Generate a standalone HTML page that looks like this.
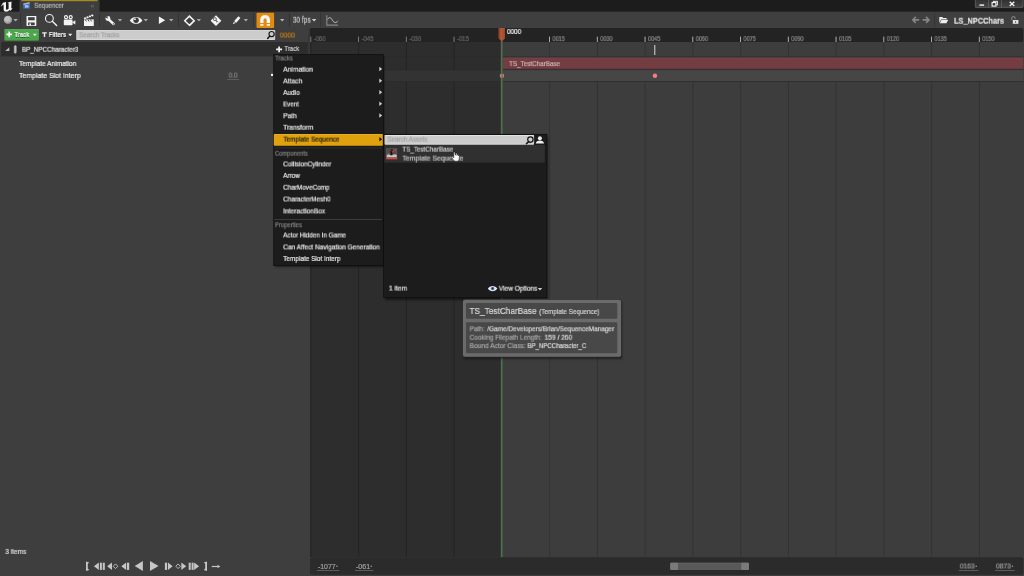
<!DOCTYPE html>
<html><head><meta charset="utf-8"><title>Sequencer</title>
<style>
html,body{margin:0;padding:0;width:1024px;height:576px;overflow:hidden;background:#3e3e3e;font-family:"Liberation Sans", sans-serif;}
#root{position:relative;width:1024px;height:576px;overflow:hidden;}
#root div,#root svg{position:absolute;}
.t{position:absolute;left:0;top:0;white-space:pre;line-height:1;transform-origin:0 0;will-change:transform;font-family:"Liberation Sans", sans-serif;-webkit-text-stroke:0.22px;}
</style></head><body><div id="root">
<svg width="1024" height="576" viewBox="0 0 1024 576" style="left:0;top:0"><rect x="0.00" y="0.00" width="1024.00" height="11.80" fill="#1c1c1c"/><g transform="translate(0 0)"><path d="M3 2.7L6 2.1V8.5C6 9.6 6.7 10 7.5 9.5L8.6 8.7V3.3L7.5 2.7L11.5 1.5L11.3 8.5L12.7 8.1L10.7 10.7L9.7 9.9C8.1 11.3 6.7 12.1 5.4 11.7C4 11.3 3.6 10.1 3.6 8.9V4.5C2.6 5.1 1.6 6.1 0.5 6.9C1.4 5.4 2.4 3.8 3 2.7Z" fill="#f4f4f4"/></g><rect x="19.50" y="0.00" width="80.00" height="12.00" rx="1.0" fill="#3e3e3e"/><rect x="21.50" y="0.00" width="76.00" height="1.20" fill="#a78c1c"/><g transform="translate(23 2)"><rect x="0.3" y="1.6" width="6.6" height="5" fill="#3f74c4"/><path d="M0.3 1.6L6.4 0.1L6.9 1.4L0.6 3Z" fill="#9fb4cf"/><rect x="2" y="3.2" width="3.4" height="2.4" fill="#a8c4ea"/></g></svg>
<span class="t" style="font-size:7px;color:#bcbcbc;font-weight:normal;transform:translate(34.30px,1.80px) scaleX(0.8676);">Sequencer</span>
<span class="t" style="font-size:6px;color:#666;font-weight:normal;transform:translate(90.60px,3.20px) scaleX(1.0667);">×</span>
<svg width="1024" height="576" viewBox="0 0 1024 576" style="left:0;top:0"><defs><linearGradient id="wb" x1="0" y1="0" x2="0" y2="1"><stop offset="0" stop-color="#2e2e2e"/><stop offset="1" stop-color="#474747"/></linearGradient></defs><rect x="975.3" y="-1" width="47.8" height="8.6" rx="0.8" fill="url(#wb)" stroke="#737373" stroke-width="0.6"/><rect x="988.30" y="0.00" width="0.60" height="7.40" fill="#707070"/><rect x="1001.20" y="0.00" width="0.60" height="7.40" fill="#707070"/><rect x="979.50" y="4.40" width="4.60" height="1.40" fill="#f4f4f4"/><g transform="translate(991.5 0.8)"><rect x="1.9" y="0.5" width="4" height="3.6" fill="none" stroke="#f2f2f2" stroke-width="0.9"/><rect x="0.6" y="1.7" width="3.8" height="3.6" fill="#3c3c3c" stroke="#f2f2f2" stroke-width="1.1"/></g><g transform="translate(1009.2 1.4)"><path d="M0.5 0.4L5.1 4.6M5.1 0.4L0.5 4.6" stroke="#f4f4f4" stroke-width="1.3"/></g><rect x="0.00" y="11.80" width="1024.00" height="16.40" fill="#3f3f3f"/><rect x="20.40" y="13.40" width="0.90" height="13.40" fill="#2d2d2d"/><rect x="21.30" y="13.40" width="0.50" height="13.40" fill="#474747"/><rect x="99.30" y="13.40" width="0.90" height="13.40" fill="#2d2d2d"/><rect x="100.20" y="13.40" width="0.50" height="13.40" fill="#474747"/><rect x="178.40" y="13.40" width="0.90" height="13.40" fill="#2d2d2d"/><rect x="179.30" y="13.40" width="0.50" height="13.40" fill="#474747"/><rect x="253.30" y="13.40" width="0.90" height="13.40" fill="#2d2d2d"/><rect x="254.20" y="13.40" width="0.50" height="13.40" fill="#474747"/><rect x="289.30" y="13.40" width="0.90" height="13.40" fill="#2d2d2d"/><rect x="290.20" y="13.40" width="0.50" height="13.40" fill="#474747"/><rect x="320.50" y="13.40" width="0.90" height="13.40" fill="#2d2d2d"/><rect x="321.40" y="13.40" width="0.50" height="13.40" fill="#474747"/><rect x="934.40" y="13.40" width="0.90" height="13.40" fill="#2d2d2d"/><rect x="935.30" y="13.40" width="0.50" height="13.40" fill="#474747"/><rect x="0.00" y="28.00" width="310.00" height="14.00" fill="#3e3e3e"/><rect x="4.40" y="29.20" width="34.50" height="11.30" rx="1.0" fill="#4ba64c"/><rect x="4.70" y="29.20" width="33.90" height="0.60" fill="#62bd62"/><rect x="4.70" y="39.90" width="33.90" height="0.60" fill="#3b8b3c"/></svg>
<span class="t" style="font-size:7.4px;color:#e4efe4;font-weight:bold;transform:translate(14.50px,31.00px) scaleX(0.7650);text-shadow:0 0.6px 0.4px rgba(0,0,0,.55);">Track</span>
<span class="t" style="font-size:7.4px;color:#ececec;font-weight:bold;transform:translate(48.80px,31.00px) scaleX(0.7818);text-shadow:0 0.6px 0.4px rgba(0,0,0,.55);">Filters</span>
<svg width="1024" height="576" viewBox="0 0 1024 576" style="left:0;top:0"><rect x="76.20" y="30.20" width="199.00" height="9.80" rx="1.0" fill="#cccccc"/><rect x="76.50" y="30.20" width="198.40" height="0.70" fill="#e8e8e8"/><rect x="76.50" y="39.40" width="198.40" height="0.60" fill="#e2e2e2"/></svg>
<span class="t" style="font-size:7.2px;color:#a0a0a0;font-weight:normal;transform:translate(79.20px,31.20px) scaleX(0.8761);">Search Tracks</span>
<span class="t" style="font-size:7.7px;color:#c97c18;font-weight:normal;transform:translate(279.80px,31.60px) scaleX(0.8941);">0000</span>
<svg width="1024" height="576" viewBox="0 0 1024 576" style="left:0;top:0"><rect x="1.20" y="42.00" width="306.80" height="14.40" fill="#2d2d2d"/></svg>
<span class="t" style="font-size:7.2px;color:#e2e2e2;font-weight:normal;transform:translate(21.90px,45.80px) scaleX(0.8781);">BP_NPCCharacter3</span>
<span class="t" style="font-size:7px;color:#c9c9c9;font-weight:normal;transform:translate(284.40px,45.00px) scaleX(0.8588);">Track</span>
<span class="t" style="font-size:7.2px;color:#ececec;font-weight:normal;transform:translate(19.00px,60.00px) scaleX(0.9127);">Template Animation</span>
<span class="t" style="font-size:7.2px;color:#ececec;font-weight:normal;transform:translate(19.00px,72.00px) scaleX(0.9641);">Template Slot Interp</span>
<span class="t" style="font-size:7px;color:#8a8a8a;font-weight:normal;transform:translate(228.70px,71.60px) scaleX(0.9000);">0.0</span>
<svg width="1024" height="576" viewBox="0 0 1024 576" style="left:0;top:0"><rect x="227.20" y="79.20" width="11.80" height="0.70" fill="#6e6e6e"/><rect x="271.00" y="73.80" width="2.20" height="2.20" fill="#f0f0f0"/></svg>
<span class="t" style="font-size:7.2px;color:#dcdcdc;font-weight:normal;transform:translate(5.30px,547.90px) scaleX(0.9087);">3 items</span>
<svg width="1024" height="576" viewBox="0 0 1024 576" style="left:0;top:0"><rect x="308.00" y="28.00" width="2.00" height="29.00" fill="#383838"/><rect x="310.00" y="42.00" width="192.95" height="515.00" fill="#2d2d2d"/><rect x="502.95" y="42.00" width="520.35" height="515.00" fill="#3d3d3d"/><rect x="310.45" y="42.00" width="0.90" height="515.00" fill="#242424"/><rect x="358.20" y="42.00" width="0.90" height="515.00" fill="#242424"/><rect x="405.95" y="42.00" width="0.90" height="515.00" fill="#242424"/><rect x="453.70" y="42.00" width="0.90" height="515.00" fill="#242424"/><rect x="549.20" y="42.00" width="0.90" height="515.00" fill="#323232"/><rect x="596.95" y="42.00" width="0.90" height="515.00" fill="#323232"/><rect x="644.70" y="42.00" width="0.90" height="515.00" fill="#323232"/><rect x="692.45" y="42.00" width="0.90" height="515.00" fill="#323232"/><rect x="740.20" y="42.00" width="0.90" height="515.00" fill="#323232"/><rect x="787.95" y="42.00" width="0.90" height="515.00" fill="#323232"/><rect x="835.70" y="42.00" width="0.90" height="515.00" fill="#323232"/><rect x="883.45" y="42.00" width="0.90" height="515.00" fill="#323232"/><rect x="931.20" y="42.00" width="0.90" height="515.00" fill="#323232"/><rect x="978.95" y="42.00" width="0.90" height="515.00" fill="#323232"/><rect x="310.00" y="70.00" width="192.95" height="11.00" fill="#333333"/><rect x="502.95" y="57.00" width="520.35" height="12.60" fill="#424242"/><rect x="502.95" y="70.00" width="520.35" height="11.00" fill="#464646"/><rect x="310.00" y="56.60" width="713.30" height="0.70" fill="#2a2a2a"/><rect x="310.00" y="69.40" width="713.30" height="0.70" fill="#2a2a2a"/><rect x="310.00" y="81.00" width="713.30" height="0.70" fill="#2c2c2c"/><rect x="503.10" y="57.80" width="520.20" height="11.20" fill="#743d42"/><rect x="503.10" y="57.80" width="520.20" height="0.60" fill="#7d4349"/><rect x="503.10" y="68.40" width="520.20" height="0.60" fill="#633338"/></svg>
<span class="t" style="font-size:7.2px;color:#cfb3b4;font-weight:normal;transform:translate(509.00px,60.10px) scaleX(0.8759);">TS_TestCharBase</span>
<svg width="1024" height="576" viewBox="0 0 1024 576" style="left:0;top:0"><rect x="654.30" y="45.00" width="1.00" height="10.00" fill="#d9d9d9"/><rect x="652.70" y="73.40" width="4.50" height="4.50" rx="2.25" fill="#f57d7d"/><rect x="499.70" y="73.40" width="4.50" height="4.50" rx="2.25" fill="#d9756c"/><rect x="310.00" y="28.00" width="713.30" height="14.00" rx="2.0" fill="#232323"/><rect x="310.35" y="36.60" width="0.90" height="5.40" fill="#858585"/></svg>
<span class="t" style="font-size:6.6px;color:#666666;font-weight:normal;transform:translate(313.75px,36.10px) scaleX(0.9077);">-060</span>
<svg width="1024" height="576" viewBox="0 0 1024 576" style="left:0;top:0"><rect x="358.10" y="36.60" width="0.90" height="5.40" fill="#858585"/></svg>
<span class="t" style="font-size:6.6px;color:#666666;font-weight:normal;transform:translate(361.50px,36.10px) scaleX(0.9077);">-045</span>
<svg width="1024" height="576" viewBox="0 0 1024 576" style="left:0;top:0"><rect x="405.85" y="36.60" width="0.90" height="5.40" fill="#858585"/></svg>
<span class="t" style="font-size:6.6px;color:#666666;font-weight:normal;transform:translate(409.25px,36.10px) scaleX(0.9077);">-030</span>
<svg width="1024" height="576" viewBox="0 0 1024 576" style="left:0;top:0"><rect x="453.60" y="36.60" width="0.90" height="5.40" fill="#858585"/></svg>
<span class="t" style="font-size:6.6px;color:#666666;font-weight:normal;transform:translate(457.00px,36.10px) scaleX(0.9077);">-015</span>
<svg width="1024" height="576" viewBox="0 0 1024 576" style="left:0;top:0"><rect x="549.10" y="36.60" width="0.90" height="5.40" fill="#bdbdbd"/></svg>
<span class="t" style="font-size:6.6px;color:#8a8a8a;font-weight:normal;transform:translate(552.50px,36.10px) scaleX(0.8400);">0015</span>
<svg width="1024" height="576" viewBox="0 0 1024 576" style="left:0;top:0"><rect x="596.85" y="36.60" width="0.90" height="5.40" fill="#bdbdbd"/></svg>
<span class="t" style="font-size:6.6px;color:#8a8a8a;font-weight:normal;transform:translate(600.25px,36.10px) scaleX(0.8400);">0030</span>
<svg width="1024" height="576" viewBox="0 0 1024 576" style="left:0;top:0"><rect x="644.60" y="36.60" width="0.90" height="5.40" fill="#bdbdbd"/></svg>
<span class="t" style="font-size:6.6px;color:#8a8a8a;font-weight:normal;transform:translate(648.00px,36.10px) scaleX(0.8400);">0045</span>
<svg width="1024" height="576" viewBox="0 0 1024 576" style="left:0;top:0"><rect x="692.35" y="36.60" width="0.90" height="5.40" fill="#bdbdbd"/></svg>
<span class="t" style="font-size:6.6px;color:#8a8a8a;font-weight:normal;transform:translate(695.75px,36.10px) scaleX(0.8400);">0060</span>
<svg width="1024" height="576" viewBox="0 0 1024 576" style="left:0;top:0"><rect x="740.10" y="36.60" width="0.90" height="5.40" fill="#bdbdbd"/></svg>
<span class="t" style="font-size:6.6px;color:#8a8a8a;font-weight:normal;transform:translate(743.50px,36.10px) scaleX(0.8400);">0075</span>
<svg width="1024" height="576" viewBox="0 0 1024 576" style="left:0;top:0"><rect x="787.85" y="36.60" width="0.90" height="5.40" fill="#bdbdbd"/></svg>
<span class="t" style="font-size:6.6px;color:#8a8a8a;font-weight:normal;transform:translate(791.25px,36.10px) scaleX(0.8400);">0090</span>
<svg width="1024" height="576" viewBox="0 0 1024 576" style="left:0;top:0"><rect x="835.60" y="36.60" width="0.90" height="5.40" fill="#bdbdbd"/></svg>
<span class="t" style="font-size:6.6px;color:#8a8a8a;font-weight:normal;transform:translate(839.00px,36.10px) scaleX(0.8400);">0105</span>
<svg width="1024" height="576" viewBox="0 0 1024 576" style="left:0;top:0"><rect x="883.35" y="36.60" width="0.90" height="5.40" fill="#bdbdbd"/></svg>
<span class="t" style="font-size:6.6px;color:#8a8a8a;font-weight:normal;transform:translate(886.75px,36.10px) scaleX(0.8400);">0120</span>
<svg width="1024" height="576" viewBox="0 0 1024 576" style="left:0;top:0"><rect x="931.10" y="36.60" width="0.90" height="5.40" fill="#bdbdbd"/></svg>
<span class="t" style="font-size:6.6px;color:#8a8a8a;font-weight:normal;transform:translate(934.50px,36.10px) scaleX(0.8400);">0135</span>
<svg width="1024" height="576" viewBox="0 0 1024 576" style="left:0;top:0"><rect x="978.85" y="36.60" width="0.90" height="5.40" fill="#bdbdbd"/></svg>
<span class="t" style="font-size:6.6px;color:#8a8a8a;font-weight:normal;transform:translate(982.25px,36.10px) scaleX(0.8400);">0150</span>
<svg width="1024" height="576" viewBox="0 0 1024 576" style="left:0;top:0"><rect x="500.90" y="41.00" width="0.70" height="516.00" fill="#7f8b80"/><rect x="501.55" y="41.00" width="1.10" height="516.00" fill="#457a4a"/><g transform="translate(498.4 28)"><path d="M0.3 0H6.5V10.4L3.4 13.6L0.3 10.4Z" fill="#aa502e"/><path d="M0.3 0H1.4V10.8L0.3 10.4Z" fill="#964425"/><path d="M3.0 0H3.7V13.3H3.0Z" fill="#b9633c"/></g></svg>
<span class="t" style="font-size:7px;color:#f0f0f0;font-weight:normal;transform:translate(506.90px,28.00px) scaleX(0.9125);">0000</span>
<svg width="1024" height="576" viewBox="0 0 1024 576" style="left:0;top:0"><rect x="310.00" y="557.30" width="713.30" height="17.40" rx="2.0" fill="#2b2b2b"/></svg>
<span class="t" style="font-size:6.8px;color:#9e9e9e;font-weight:normal;transform:translate(317.90px,563.50px) scaleX(1.0176);">-1077</span>
<svg width="1024" height="576" viewBox="0 0 1024 576" style="left:0;top:0"><rect x="336.10" y="565.50" width="1.60" height="1.60" rx="0.8" fill="#9a9a9a"/><rect x="316.90" y="570.30" width="22.30" height="0.60" fill="#7c7c7c"/></svg>
<span class="t" style="font-size:6.8px;color:#9e9e9e;font-weight:normal;transform:translate(356.00px,563.50px) scaleX(1.0385);">-061</span>
<svg width="1024" height="576" viewBox="0 0 1024 576" style="left:0;top:0"><rect x="370.40" y="565.50" width="1.60" height="1.60" rx="0.8" fill="#9a9a9a"/><rect x="355.00" y="570.30" width="18.50" height="0.60" fill="#7c7c7c"/></svg>
<span class="t" style="font-size:6.8px;color:#9e9e9e;font-weight:normal;transform:translate(959.80px,563.50px) scaleX(0.9800);">0163</span>
<svg width="1024" height="576" viewBox="0 0 1024 576" style="left:0;top:0"><rect x="975.40" y="565.50" width="1.60" height="1.60" rx="0.8" fill="#9a9a9a"/><rect x="958.80" y="570.30" width="19.70" height="0.60" fill="#7c7c7c"/></svg>
<span class="t" style="font-size:6.8px;color:#9e9e9e;font-weight:normal;transform:translate(996.00px,563.50px) scaleX(0.9800);">0873</span>
<svg width="1024" height="576" viewBox="0 0 1024 576" style="left:0;top:0"><rect x="1011.60" y="565.50" width="1.60" height="1.60" rx="0.8" fill="#9a9a9a"/><rect x="995.00" y="570.30" width="19.70" height="0.60" fill="#7c7c7c"/><rect x="670.20" y="562.80" width="78.80" height="7.10" rx="1.2" fill="#595959"/><rect x="670.56" y="562.80" width="78.08" height="0.60" fill="#6a6a6a"/><rect x="670.20" y="562.80" width="7.80" height="7.10" rx="1.2" fill="#7a7a7a"/><rect x="741.20" y="562.80" width="7.80" height="7.10" rx="1.2" fill="#7a7a7a"/><g transform="translate(3.7 15.6)"><defs><radialGradient id="gg" cx="0.4" cy="0.35" r="0.7"><stop offset="0" stop-color="#d6d6d6"/><stop offset="0.6" stop-color="#adadad"/><stop offset="1" stop-color="#767676"/></radialGradient></defs><circle cx="4.3" cy="4.3" r="4.2" fill="url(#gg)"/><path d="M2.2 2.2L3.8 1.6L4.6 2.8L3.6 4.4L2.6 3.8ZM5 4.2L6.6 3.6L7 5.4L5.6 6.6Z" fill="#b9b9b9" opacity="0.7"/></g><g transform="translate(13.4 19.1)"><path d="M0 0H4.4L2.2 2.5Z" fill="#a8a8a8"/></g><g transform="translate(26.4 15.9)"><rect x="0.1" y="0.1" width="9.8" height="10" rx="0.4" fill="#f3f3f3"/><rect x="1.7" y="1.3" width="6.6" height="3.1" fill="#3f3f3f"/><rect x="1.7" y="6.6" width="6.6" height="2.8" fill="#3f3f3f"/><rect x="3" y="7.5" width="1.6" height="1.9" fill="#f3f3f3"/></g><g transform="translate(44.6 13.6)"><circle cx="4.8" cy="4.8" r="3.9" fill="none" stroke="#f3f3f3" stroke-width="1.1"/><path d="M7.7 7.7L12 12" stroke="#f3f3f3" stroke-width="1.4" stroke-linecap="round"/></g><g transform="translate(63.6 14.7)"><circle cx="2.4" cy="2.5" r="1.5" fill="none" stroke="#f3f3f3" stroke-width="1.2"/><circle cx="7.1" cy="2.5" r="1.5" fill="none" stroke="#f3f3f3" stroke-width="1.2"/><rect x="0.2" y="4.9" width="8.8" height="5.6" rx="0.8" fill="#f3f3f3"/><path d="M8.6 7.7L11.7 5.5V9.7L8.6 7.7Z" fill="#f3f3f3"/></g><g transform="translate(83.6 13.8)"><path d="M0.4 5.6H10.2V12.2H0.4Z" fill="#f3f3f3"/><path d="M0.2 3.9L9.3 0.4L10 2.2L0.9 5.6Z" fill="#f3f3f3"/><path d="M2.2 3.3L3.6 5.2M4.6 2.4L6 4.3M7 1.5L8.3 3.3" stroke="#3f3f3f" stroke-width="0.9"/><path d="M1.6 5.7L2.8 7.6M4.2 5.7L5.4 7.6M6.8 5.7L8 7.6" stroke="#3f3f3f" stroke-width="1"/></g><g transform="translate(105.4 15.8)"><path d="M2.4 2.8L8.2 8.2" stroke="#f3f3f3" stroke-width="2.5" stroke-linecap="round"/><circle cx="2.5" cy="2.7" r="2.45" fill="#f3f3f3"/><path d="M-0.2 1.4L2.3 2.9L2.1 -0.2Z" fill="#3f3f3f"/><circle cx="8.1" cy="8.1" r="0.65" fill="#3f3f3f"/></g><g transform="translate(117.8 19.1)"><path d="M0 0H4.4L2.2 2.4Z" fill="#a8a8a8"/></g><g transform="translate(129.6 16.5)"><path d="M0.2 3.9C3 -0.6 10 -0.6 12.8 3.9C10 8.4 3 8.4 0.2 3.9Z" fill="#f3f3f3"/><circle cx="6.5" cy="3.7" r="2.7" fill="#3a3a3a"/><circle cx="5.4" cy="2.7" r="0.9" fill="#f3f3f3"/></g><g transform="translate(143.6 19.1)"><path d="M0 0H4.4L2.2 2.4Z" fill="#a8a8a8"/></g><g transform="translate(158.8 16.3)"><path d="M0.1 0.1L6.4 3.95L0.1 7.8Z" fill="#f3f3f3"/></g><g transform="translate(169 19.1)"><path d="M0 0H4.5L2.25 2.4Z" fill="#a8a8a8"/></g><g transform="translate(183.6 14.9)"><path d="M5.8 1.2L10.5 5.8L5.8 10.4L1.1 5.8Z" fill="none" stroke="#f3f3f3" stroke-width="1.5"/><path d="M5.8 10.9L10.9 5.8" stroke="#f3f3f3" stroke-width="1.2"/></g><g transform="translate(196.7 19.1)"><path d="M0 0H4.4L2.2 2.4Z" fill="#a8a8a8"/></g><g transform="translate(210.2 14.9)"><path d="M5.8 0.4L11.2 5.8L5.8 11.2L0.4 5.8Z" fill="#f3f3f3"/><circle cx="4.7" cy="4.2" r="1.5" fill="none" stroke="#555" stroke-width="0.9"/><path d="M5.7 5.2L7.6 7.3M6.8 6.5L6 7.3" stroke="#444" stroke-width="0.9"/></g><g transform="translate(232.5 15.9)"><path d="M1.7 5.1L5.9 0.3L7.9 2.1L3.6 7Z" fill="#f3f3f3"/><path d="M1.4 5.9L2.9 7.3L0.3 8.2Z" fill="#f3f3f3"/></g><g transform="translate(243.7 19.1)"><path d="M0 0H4.4L2.2 2.4Z" fill="#a8a8a8"/></g><rect x="256.50" y="12.80" width="17.60" height="15.10" rx="1.0" fill="#e18b10"/><g transform="translate(260 14.8)"><path d="M1.85 8.2V5A3.25 3.25 0 0 1 8.35 5V8.2" fill="none" stroke="#f6f6f6" stroke-width="3.3"/><rect x="0.2" y="9.3" width="3.3" height="1.6" fill="#f6f6f6"/><rect x="6.7" y="9.3" width="3.3" height="1.6" fill="#f6f6f6"/></g><g transform="translate(280 19.1)"><path d="M0 0H4.4L2.2 2.4Z" fill="#b8b8b8"/></g></svg>
<span class="t" style="font-size:8.3px;color:#c8c8c8;font-weight:normal;transform:translate(292.80px,15.70px) scaleX(0.7913);">30 fps</span>
<svg width="1024" height="576" viewBox="0 0 1024 576" style="left:0;top:0"><g transform="translate(311.9 19.1)"><path d="M0 0H4.4L2.2 2.4Z" fill="#d0d0d0"/></g><g transform="translate(326 15)"><path d="M0.8 0.2V10.2H12.1" fill="none" stroke="#858585" stroke-width="1.2"/><path d="M1.6 4.4C3.6 1.2 5 2.8 6.4 5.2C7.9 7.8 10 8.6 11.8 5.8" fill="none" stroke="#cfcfcf" stroke-width="0.9"/></g><g transform="translate(912 16.3)"><path d="M7.2 3.6H1.2M3.8 0.6L0.8 3.6L3.8 6.6" fill="none" stroke="#858585" stroke-width="1.6"/></g><g transform="translate(922.4 16.3)"><path d="M0.2 3.6H6.2M3.6 0.6L6.6 3.6L3.6 6.6" fill="none" stroke="#858585" stroke-width="1.6"/></g><g transform="translate(939 16.2)"><path d="M0.3 0.9H3.3L4.1 1.9H7.6V3H2.3L0.3 6.6Z" fill="#eeeeee"/><path d="M2.6 3.5H9.2L7.4 7.1H0.7Z" fill="#eeeeee"/></g></svg>
<span class="t" style="font-size:9.6px;color:#e6e6e6;font-weight:bold;transform:translate(954.00px,15.70px) scaleX(0.7692);">LS_NPCChars</span>
<svg width="1024" height="576" viewBox="0 0 1024 576" style="left:0;top:0"><g transform="translate(1010.6 15.8)"><path d="M1.2 4.2V2.4A1.7 1.7 0 0 1 4.6 2.4V3" fill="none" stroke="#9a9a9a" stroke-width="0.9"/><rect x="2.2" y="4.2" width="5.6" height="3.8" fill="#e4e4e4"/><rect x="4.5" y="5.3" width="1" height="1.7" fill="#555"/></g><g transform="translate(6.3 31.5)"><path d="M2.9 0.1V5.7M0.1 2.9H5.7" stroke="#f7f7f7" stroke-width="1.7"/></g><g transform="translate(32.8 33.8)"><path d="M0 0H4L2.0 2.4Z" fill="#e6f0e6"/></g><g transform="translate(42.2 32.2)"><path d="M0 0H4.6V1.4H3V4.7H1.6V1.4H0Z" fill="#efefef"/></g><g transform="translate(68.1 33.8)"><path d="M0 0H4.2L2.1 2.4Z" fill="#ededed"/></g><g transform="translate(267 30.6)"><circle cx="4.6" cy="3.5" r="2.6" fill="none" stroke="#161616" stroke-width="1.2"/><path d="M2.8 5.5L0.7 7.8" stroke="#161616" stroke-width="1.5" stroke-linecap="round"/></g><g transform="translate(5 47.2)"><path d="M4.3 0V3.9H0.2Z" fill="#bdbdbd"/></g><g transform="translate(12.8 45)"><defs><linearGradient id="cg" x1="0" x2="1"><stop offset="0" stop-color="#6a6a6a"/><stop offset="0.45" stop-color="#d6d6d6"/><stop offset="1" stop-color="#6a6a6a"/></linearGradient></defs><rect x="0.9" y="0.2" width="3.2" height="8.4" rx="1.6" fill="url(#cg)"/></g><g transform="translate(276 46.3)"><path d="M3.1 0.1V5.9M0.1 3H6.1" stroke="#f2f2f2" stroke-width="1.7"/></g><g transform="translate(85.8 561.3)"><path d="M0.2 0.1L3.4 1.1L2 2.5V7.3L3.4 8.7L0.2 9.7Z" fill="#c6c6c6"/></g><g transform="translate(93.8 562.4)"><path d="M5.1 0.1V7.6L0.1 3.85Z" fill="#c6c6c6"/><rect x="6.1" y="0.3" width="2" height="7.2" fill="#c6c6c6"/><rect x="9" y="0.3" width="2" height="7.2" fill="#c6c6c6"/></g><g transform="translate(107 562.4)"><path d="M5 0.1V7.6L0.1 3.85Z" fill="#c6c6c6"/><path d="M8.5 1.5L10.8 3.85L8.5 6.2L6.2 3.85Z" fill="none" stroke="#c6c6c6" stroke-width="0.9"/></g><g transform="translate(121.2 562.4)"><path d="M5 0.1V7.6L0.1 3.85Z" fill="#c6c6c6"/><rect x="5.8" y="0.3" width="2.2" height="7.2" fill="#c6c6c6"/></g><g transform="translate(134.6 560.9)"><path d="M8.3 0.1V10L0.1 5.05Z" fill="#c6c6c6"/></g><g transform="translate(149.8 560.9)"><path d="M0.2 0.1V10L8.7 5.05Z" fill="#c6c6c6"/></g><g transform="translate(164.8 562.4)"><rect x="0.1" y="0.3" width="2.2" height="7.2" fill="#c6c6c6"/><path d="M3.2 0.1V7.6L7.8 3.85Z" fill="#c6c6c6"/></g><g transform="translate(175.4 562.4)"><path d="M2.7 1.5L5 3.85L2.7 6.2L0.4 3.85Z" fill="none" stroke="#c6c6c6" stroke-width="0.9"/><path d="M5.9 0.1V7.6L10.9 3.85Z" fill="#c6c6c6"/></g><g transform="translate(188.6 562.4)"><rect x="0.1" y="0.3" width="2" height="7.2" fill="#c6c6c6"/><rect x="3" y="0.3" width="2" height="7.2" fill="#c6c6c6"/><path d="M5.5 0.1V7.6L10.5 3.85Z" fill="#c6c6c6"/></g><g transform="translate(203.6 561.3)"><path d="M3.4 0.1L0.2 1.1L1.6 2.5V7.3L0.2 8.7L3.4 9.7Z" fill="#c6c6c6"/></g><g transform="translate(211.5 564.6)"><path d="M0.2 1.9H6.4" stroke="#c6c6c6" stroke-width="1.2"/><path d="M6 0.1L8.8 1.9L6 3.7Z" fill="#c6c6c6"/></g></svg>
<div style="left:274px;top:55px;width:109px;height:210px;box-shadow:1px 1.5px 2px rgba(0,0,0,.5);"></div>
<svg width="1024" height="576" viewBox="0 0 1024 576" style="left:0;top:0"><rect x="273.30" y="54.20" width="110.80" height="211.80" fill="#0e0e0e"/><rect x="274.00" y="54.90" width="109.40" height="210.40" fill="#1c1c1c"/></svg>
<span class="t" style="font-size:7px;color:#808080;font-weight:normal;transform:translate(275.00px,54.50px) scaleX(0.8571);">Tracks</span>
<span class="t" style="font-size:7.2px;color:#e6e6e6;font-weight:normal;transform:translate(283.20px,65.75px) scaleX(0.9313);">Animation</span>
<svg width="1024" height="576" viewBox="0 0 1024 576" style="left:0;top:0"><g transform="translate(379.3 66.75)"><path d="M0 0L2.8 2.3L0 4.6Z" fill="#d0d0d0"/></g></svg>
<span class="t" style="font-size:7.2px;color:#e6e6e6;font-weight:normal;transform:translate(283.20px,77.40px) scaleX(0.9400);">Attach</span>
<svg width="1024" height="576" viewBox="0 0 1024 576" style="left:0;top:0"><g transform="translate(379.3 78.4)"><path d="M0 0L2.8 2.3L0 4.6Z" fill="#d0d0d0"/></g></svg>
<span class="t" style="font-size:7.2px;color:#e6e6e6;font-weight:normal;transform:translate(283.20px,88.90px) scaleX(0.8947);">Audio</span>
<svg width="1024" height="576" viewBox="0 0 1024 576" style="left:0;top:0"><g transform="translate(379.3 89.9)"><path d="M0 0L2.8 2.3L0 4.6Z" fill="#d0d0d0"/></g></svg>
<span class="t" style="font-size:7.2px;color:#e6e6e6;font-weight:normal;transform:translate(283.20px,100.50px) scaleX(0.8421);">Event</span>
<svg width="1024" height="576" viewBox="0 0 1024 576" style="left:0;top:0"><g transform="translate(379.3 101.5)"><path d="M0 0L2.8 2.3L0 4.6Z" fill="#d0d0d0"/></g></svg>
<span class="t" style="font-size:7.2px;color:#e6e6e6;font-weight:normal;transform:translate(283.20px,112.25px) scaleX(0.9200);">Path</span>
<svg width="1024" height="576" viewBox="0 0 1024 576" style="left:0;top:0"><g transform="translate(379.3 113.25)"><path d="M0 0L2.8 2.3L0 4.6Z" fill="#d0d0d0"/></g></svg>
<span class="t" style="font-size:7.2px;color:#e6e6e6;font-weight:normal;transform:translate(283.20px,123.75px) scaleX(0.9313);">Transform</span>
<svg width="1024" height="576" viewBox="0 0 1024 576" style="left:0;top:0"><rect x="273.80" y="134.10" width="109.00" height="11.70" rx="1.0" fill="#dfa20e"/><rect x="274.10" y="134.10" width="108.40" height="0.60" fill="#edb62f"/><rect x="274.10" y="145.20" width="108.40" height="0.60" fill="#b8830a"/></svg>
<span class="t" style="font-size:7.2px;color:#1d1a10;font-weight:normal;transform:translate(283.50px,135.60px) scaleX(0.8810);">Template Sequence</span>
<svg width="1024" height="576" viewBox="0 0 1024 576" style="left:0;top:0"><g transform="translate(379.3 136.9)"><path d="M0 0L2.8 2.3L0 4.6Z" fill="#15130c"/></g><rect x="274.50" y="147.60" width="107.50" height="0.70" fill="#383838"/></svg>
<span class="t" style="font-size:7px;color:#808080;font-weight:normal;transform:translate(275.00px,149.75px) scaleX(0.8250);">Components</span>
<span class="t" style="font-size:7.2px;color:#e6e6e6;font-weight:normal;transform:translate(283.20px,160.40px) scaleX(0.8944);">CollisionCylinder</span>
<span class="t" style="font-size:7.2px;color:#e6e6e6;font-weight:normal;transform:translate(283.20px,171.90px) scaleX(0.8947);">Arrow</span>
<span class="t" style="font-size:7.2px;color:#e6e6e6;font-weight:normal;transform:translate(283.20px,183.75px) scaleX(0.8865);">CharMoveComp</span>
<span class="t" style="font-size:7.2px;color:#e6e6e6;font-weight:normal;transform:translate(283.20px,195.50px) scaleX(0.8887);">CharacterMesh0</span>
<span class="t" style="font-size:7.2px;color:#e6e6e6;font-weight:normal;transform:translate(283.20px,207.40px) scaleX(0.9152);">InteractionBox</span>
<svg width="1024" height="576" viewBox="0 0 1024 576" style="left:0;top:0"><rect x="274.50" y="219.10" width="107.50" height="0.70" fill="#4a4a4a"/></svg>
<span class="t" style="font-size:7px;color:#808080;font-weight:normal;transform:translate(275.00px,221.25px) scaleX(0.8438);">Properties</span>
<span class="t" style="font-size:7.2px;color:#e6e6e6;font-weight:normal;transform:translate(283.20px,231.50px) scaleX(0.8831);">Actor Hidden In Game</span>
<span class="t" style="font-size:7.2px;color:#e6e6e6;font-weight:normal;transform:translate(283.20px,243.40px) scaleX(0.9066);">Can Affect Navigation Generation</span>
<span class="t" style="font-size:7.2px;color:#e6e6e6;font-weight:normal;transform:translate(283.20px,255.00px) scaleX(0.8953);">Template Slot Interp</span>
<div style="left:384px;top:135px;width:163px;height:163px;box-shadow:1px 1.5px 2px rgba(0,0,0,.5);"></div>
<svg width="1024" height="576" viewBox="0 0 1024 576" style="left:0;top:0"><rect x="383.30" y="133.90" width="164.00" height="164.00" fill="#0e0e0e"/><rect x="384.00" y="134.60" width="162.60" height="162.60" fill="#1c1c1c"/><rect x="384.50" y="135.00" width="149.60" height="9.50" rx="1.0" fill="#cccccc"/><rect x="384.80" y="135.00" width="149.00" height="0.70" fill="#ececec"/><rect x="384.80" y="143.80" width="149.00" height="0.70" fill="#e6e6e6"/></svg>
<span class="t" style="font-size:7.2px;color:#a0a0a0;font-weight:normal;transform:translate(387.50px,135.60px) scaleX(0.8696);">Search Assets</span>
<svg width="1024" height="576" viewBox="0 0 1024 576" style="left:0;top:0"><rect x="384.50" y="145.00" width="160.30" height="17.60" fill="#303030"/></svg>
<span class="t" style="font-size:7.2px;color:#d0d0d0;font-weight:normal;transform:translate(402.30px,145.60px) scaleX(0.8741);">TS_TestCharBase</span>
<span class="t" style="font-size:7.2px;color:#c4c4c4;font-weight:normal;transform:translate(402.40px,154.60px) scaleX(0.9619);">Template Sequence</span>
<span class="t" style="font-size:7.2px;color:#e4e4e4;font-weight:normal;transform:translate(388.90px,284.60px) scaleX(0.9316);">1 item</span>
<span class="t" style="font-size:7.2px;color:#e4e4e4;font-weight:normal;transform:translate(498.80px,284.70px) scaleX(0.9143);">View Options</span>
<svg width="1024" height="576" viewBox="0 0 1024 576" style="left:0;top:0"><g transform="translate(537.8 288.0)"><path d="M0 0H4.4L2.2 2.4Z" fill="#cfcfcf"/></g></svg>
<div style="left:463px;top:300px;width:158px;height:57px;box-shadow:1px 1.5px 2px rgba(0,0,0,.45);"></div>
<svg width="1024" height="576" viewBox="0 0 1024 576" style="left:0;top:0"><rect x="462.30" y="299.20" width="159.40" height="58.20" rx="2.6" fill="#2a2a2a"/><rect x="462.90" y="299.80" width="158.20" height="57.00" rx="2.0" fill="#6b6b6b"/><rect x="466.00" y="303.10" width="151.30" height="15.70" rx="1.2" fill="#484848"/><rect x="466.00" y="322.20" width="151.30" height="31.00" rx="1.2" fill="#484848"/></svg>
<span class="t" style="font-size:9.2px;color:#d9d9d9;font-weight:normal;transform:translate(469.50px,307.00px) scaleX(0.9000);">TS_TestCharBase</span>
<span class="t" style="font-size:7.4px;color:#cfcfcf;font-weight:normal;transform:translate(539.10px,308.00px) scaleX(0.8586);">(Template Sequence)</span>
<span class="t" style="font-size:7.4px;color:#a6a6a6;font-weight:normal;transform:translate(469.60px,325.25px) scaleX(0.8706);">Path:</span>
<span class="t" style="font-size:7.4px;color:#dcdcdc;font-weight:normal;transform:translate(487.30px,325.25px) scaleX(0.8719);">/Game/Developers/Brian/SequenceManager</span>
<span class="t" style="font-size:7.4px;color:#a6a6a6;font-weight:normal;transform:translate(469.60px,333.75px) scaleX(0.8756);">Cooking Filepath Length:</span>
<span class="t" style="font-size:7.4px;color:#dcdcdc;font-weight:normal;transform:translate(544.60px,333.75px) scaleX(0.8935);">159 / 260</span>
<span class="t" style="font-size:7.4px;color:#a6a6a6;font-weight:normal;transform:translate(469.60px,342.10px) scaleX(0.8935);">Bound Actor Class:</span>
<span class="t" style="font-size:7.4px;color:#dcdcdc;font-weight:normal;transform:translate(527.40px,342.10px) scaleX(0.8225);">BP_NPCCharacter_C</span>
<svg width="1024" height="576" viewBox="0 0 1024 576" style="left:0;top:0"><g transform="translate(386.3 148.5)"><rect x="0" y="0" width="10.8" height="10.7" fill="#6f6f6f"/><rect x="0.5" y="0.5" width="9.8" height="6" fill="#4c4c4c"/><path d="M0.5 6.4H10.3V8.8H0.5Z" fill="#c4c4c4"/><path d="M1.4 5.2H3.2V6.6H1.4ZM7 5.4H9.6V6.6H7Z" fill="#9a9a9a"/><path d="M4.2 1H6V6.8H4.2Z" fill="#141010"/><path d="M3.4 2.2L6.2 1.2L6.6 2.4L3.8 3.4Z" fill="#2a1c1c"/><path d="M5.8 3.6L9.6 1" stroke="#d33a30" stroke-width="1.1"/><path d="M3.2 1.4L5 2.6" stroke="#b8302a" stroke-width="0.9"/><rect x="0" y="8.8" width="10.8" height="1.9" fill="#cf4744"/></g><g transform="translate(525.6 136)"><circle cx="4.8" cy="3.6" r="2.7" fill="none" stroke="#141414" stroke-width="1.2"/><path d="M3 5.6L0.8 7.8" stroke="#141414" stroke-width="1.5" stroke-linecap="round"/></g><g transform="translate(535.6 135.8)"><circle cx="4.3" cy="2.4" r="2" fill="#f0f0f0"/><path d="M0.2 7.8C0.4 5.2 2.4 4.6 4.3 4.6C6.2 4.6 8.2 5.2 8.4 7.8Z" fill="#f0f0f0"/></g><g transform="translate(487.8 285.6)"><path d="M0.1 2.9C2.2 -0.6 7.4 -0.6 9.5 2.9C7.4 6.4 2.2 6.4 0.1 2.9Z" fill="#e9e9e9"/><circle cx="4.8" cy="2.9" r="1.7" fill="#4a66ad"/><circle cx="4.8" cy="2.9" r="0.7" fill="#1c2a52"/></g><g transform="translate(451.6 151.6)"><path d="M2.2 0.6C2.9 0.2 3.4 0.8 3.5 1.6L3.9 3.6L4.4 1.8C4.7 1.3 5.4 1.5 5.4 2.2V3.8L5.9 2.6C6.3 2.2 6.8 2.5 6.8 3.1V4.4L7.2 3.6C7.6 3.4 8 3.7 7.9 4.4L7.5 7.6C7.3 8.8 6.6 9.6 5.4 9.6H3.8C2.8 9.6 2.2 9 1.7 8.2L0.3 5.8C0 5.2 0.7 4.7 1.2 5.2L2.2 6.2Z" fill="#fbfbfb" stroke="#1a1a1a" stroke-width="0.5"/></g></svg>
</div></body></html>
